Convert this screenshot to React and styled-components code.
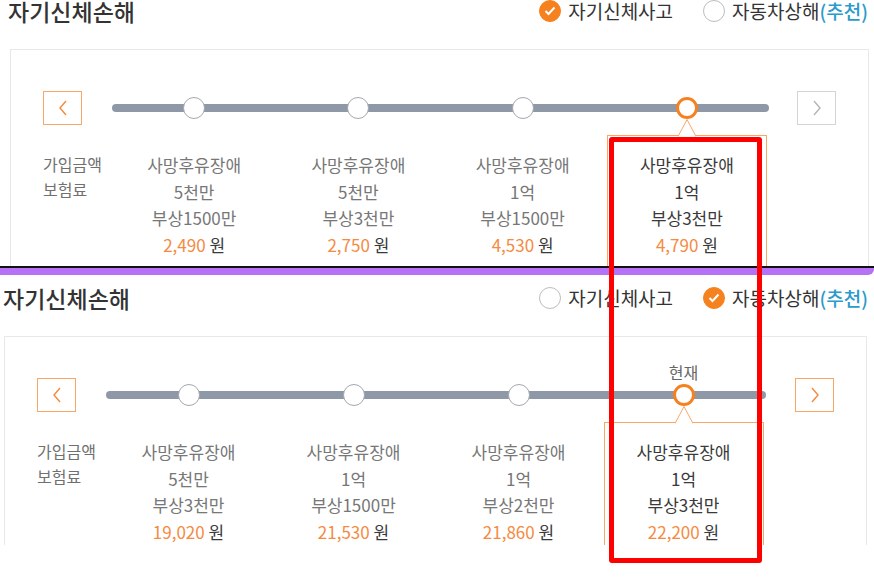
import React from "react";
import styled, { createGlobalStyle } from "styled-components";

const GlobalStyle = createGlobalStyle`
  html, body {
    margin: 0;
    padding: 0;
    background: #fff;
  }
  body {
    font-family: "Noto Sans CJK KR", "Noto Sans", sans-serif;
    color: #333;
  }
`;

const ORANGE = "#f5821f";

const Page = styled.div`
  position: relative;
  width: 874px;
  height: 580px;
  overflow: hidden;
  background: #fff;
`;

const Shot = styled.div`
  height: ${props => props.$height}px;
  overflow: hidden;
`;

const Divider = styled.div`
  height: 2px;
  background: #111;
  border-bottom: 7px solid #b672f6;
  border-bottom-right-radius: 6px;
`;

const PanelWrap = styled.div`
  margin-top: ${props => props.$shiftY || 0}px;
  padding: 0 6px 0 ${props => props.$left}px;
`;

const Header = styled.div`
  height: 45px;
  display: flex;
  align-items: center;
  justify-content: space-between;
`;

const Title = styled.h2`
  margin: 0;
  font-size: 23px;
  font-weight: 500;
  color: #333;
`;

const Options = styled.div`
  display: flex;
  align-items: center;
  gap: 30px;
`;

const Option = styled.label`
  display: flex;
  align-items: center;
  gap: 7px;
  font-size: 19px;
  color: #333;
`;

const Circle = styled.span`
  width: 22px;
  height: 22px;
  border-radius: 50%;
  box-sizing: border-box;
  display: flex;
  align-items: center;
  justify-content: center;
  background: ${props => (props.$checked ? ORANGE : "#fff")};
  border: 1px solid ${props => (props.$checked ? ORANGE : "#bdbdbd")};
`;

const Recommend = styled.span`
  color: #2b9bcb;
  font-weight: 500;
`;

const Card = styled.div`
  margin: 16px ${props => props.$right}px 0 ${props => props.$cardLeft}px;
  border: 1px solid #e8e8e8;
  padding: 41px 32px 30px 32px;
  display: grid;
  grid-template-columns: 69px repeat(4, ${props => props.$seg}px) 1fr;
  row-gap: 10px;
`;

const NavButton = styled.button`
  width: 39px;
  height: 34px;
  box-sizing: border-box;
  padding: 0;
  background: #fff;
  display: flex;
  align-items: center;
  justify-content: center;
  border: 1px solid ${props => (props.$active ? "#f8a767" : "#d4d4d4")};
  color: ${props => (props.$active ? "#f5893a" : "#b4b4b4")};
  justify-self: ${props => (props.$end ? "end" : "start")};
  grid-column: ${props => (props.$end ? "6" : "1")};
`;

const Track = styled.div`
  grid-column: 2 / span 4;
  align-self: center;
  height: 8px;
  border-radius: 4px;
  background: #8e98a7;
  display: grid;
  grid-template-columns: repeat(4, 1fr);
  align-items: center;
  justify-items: center;
`;

const Node = styled.span`
  position: relative;
  width: 22px;
  height: 22px;
  margin: -7px 0;
  box-sizing: border-box;
  border-radius: 50%;
  background: #fff;
  border: ${props => (props.$selected ? `3px solid ${ORANGE}` : "1.5px solid #a3a8ae")};
`;

const NowLabel = styled.span`
  position: absolute;
  bottom: 21px;
  left: 50%;
  transform: translateX(-50%);
  font-size: 16px;
  line-height: 20px;
  white-space: nowrap;
  color: #666;
`;

const Labels = styled.div`
  grid-column: 1;
  padding-top: 17px;
  font-size: 16px;
  line-height: 25px;
  color: #707070;
`;

const Column = styled.div`
  position: relative;
  margin: 0 2.5px;
  padding: 16px 0 40px;
  border: 1px solid ${props => (props.$selected ? "#f8a767" : "transparent")};
  font-size: 17px;
  line-height: 26.5px;
  text-align: center;
  color: ${props => (props.$selected ? "#3a3a3a" : "#777")};
`;

const Caret = styled.svg`
  position: absolute;
  top: -17px;
  left: 50%;
  margin-left: -9px;
`;

const Price = styled.div`
  color: #3a3a3a;
`;

const Amount = styled.span`
  color: #f58b42;
`;

const Annotation = styled.div`
  position: absolute;
  left: 609px;
  top: 137px;
  width: 153px;
  height: 426px;
  box-sizing: border-box;
  border: 5px solid #ff0000;
  border-radius: 3px;
  pointer-events: none;
`;

const Chevron = ({ dir }) => (
  <svg width="10" height="16" viewBox="0 0 10 16">
    <polyline
      points={dir === "left" ? "8,1 2,8 8,15" : "2,1 8,8 2,15"}
      fill="none"
      stroke="currentColor"
      strokeWidth="1.4"
    />
  </svg>
);

const Radio = ({ checked, children }) => (
  <Option>
    <Circle $checked={checked}>
      {checked && (
        <svg width="12" height="10" viewBox="0 0 12 10">
          <polyline points="1.5,5 4.5,8 10.5,1.5" fill="none" stroke="#fff" strokeWidth="2" />
        </svg>
      )}
    </Circle>
    {children}
  </Option>
);

const Panel = ({ data, left, shiftY, cardLeft, right, seg, nextActive, showNow, autoChecked }) => (
  <PanelWrap $left={left} $shiftY={shiftY}>
    <Header>
      <Title>자기신체손해</Title>
      <Options>
        <Radio checked={!autoChecked}>자기신체사고</Radio>
        <Radio checked={autoChecked}>
          <span>자동차상해<Recommend>(추천)</Recommend></span>
        </Radio>
      </Options>
    </Header>
    <Card $cardLeft={cardLeft} $right={right} $seg={seg}>
      <NavButton $active>
        <Chevron dir="left" />
      </NavButton>
      <Track>
        {data.map((item, i) => (
          <Node key={i} $selected={i === 3}>
            {i === 3 && showNow && <NowLabel>현재</NowLabel>}
          </Node>
        ))}
      </Track>
      <NavButton $end $active={nextActive}>
        <Chevron dir="right" />
      </NavButton>
      <Labels>
        <div>가입금액</div>
        <div>보험료</div>
      </Labels>
      {data.map((item, i) => (
        <Column key={i} $selected={i === 3}>
          {i === 3 && (
            <Caret width="18" height="18" viewBox="0 0 18 18">
              <polygon points="0,17.5 9,0.5 18,17.5" fill="#fff" />
              <polyline points="0,17.5 9,0.5 18,17.5" fill="none" stroke="#f8a767" strokeWidth="1" />
            </Caret>
          )}
          <div>사망후유장애</div>
          <div>{item.death}</div>
          <div>{item.injury}</div>
          <Price>
            <Amount>{item.price}</Amount> 원
          </Price>
        </Column>
      ))}
    </Card>
  </PanelWrap>
);

const firstPlans = [
  { death: "5천만", injury: "부상1500만", price: "2,490" },
  { death: "5천만", injury: "부상3천만", price: "2,750" },
  { death: "1억", injury: "부상1500만", price: "4,530" },
  { death: "1억", injury: "부상3천만", price: "4,790" },
];

const secondPlans = [
  { death: "5천만", injury: "부상3천만", price: "19,020" },
  { death: "1억", injury: "부상1500만", price: "21,530" },
  { death: "1억", injury: "부상2천만", price: "21,860" },
  { death: "1억", injury: "부상3천만", price: "22,200" },
];

export default function App() {
  return (
    <Page>
      <GlobalStyle />
      <Shot $height={266}>
        <Panel
          data={firstPlans}
          left={8}
          shiftY={-12}
          cardLeft={2}
          right={-1}
          seg={164.25}
        />
      </Shot>
      <Divider />
      <Shot $height={270}>
        <Panel
          data={secondPlans}
          left={3}
          cardLeft={1}
          right={1}
          seg={165}
          nextActive
          showNow
          autoChecked
        />
      </Shot>
      <Annotation />
    </Page>
  );
}
